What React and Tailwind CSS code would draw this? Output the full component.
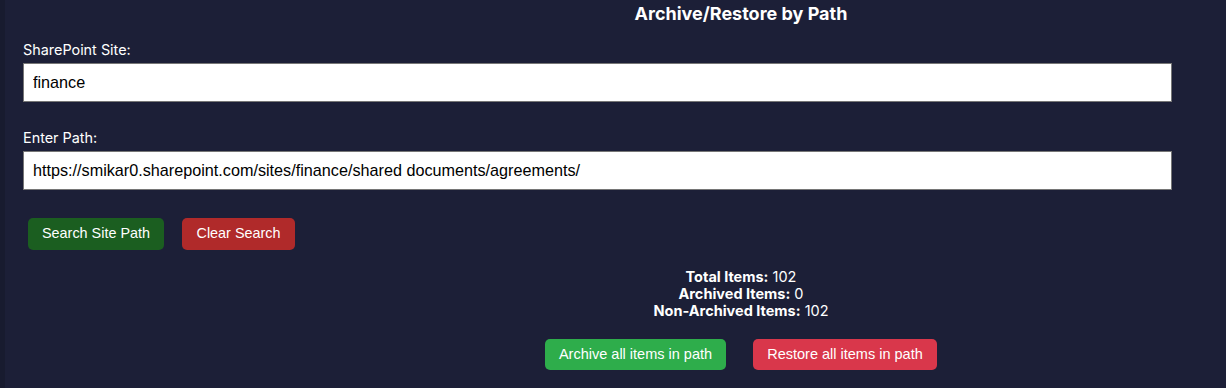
export default function App() {
  return (
    <div className="flex h-[388px] w-[1226px] overflow-hidden bg-[#1c1f37]">
      <div className="w-[5px] shrink-0 bg-[#181b2f]" />
      <div className="flex-1 pl-[18px]">
        <div className="mt-[3px] pl-[233px] text-center font-['Inter',sans-serif] text-[18px] font-bold leading-[22px] text-white">
          Archive/Restore by Path
        </div>
        <label className="mt-[16px] block font-['Inter',sans-serif] text-[14.4px] leading-[17px] text-white">
          SharePoint Site:
        </label>
        <input
          readOnly
          value="finance"
          className="mt-[5px] block h-[39px] w-[1149px] border border-[#767676] bg-white px-[9px] font-['Liberation_Sans',Arial,sans-serif] text-[16.2px] text-black outline-none"
        />
        <label className="mt-[27px] block font-['Inter',sans-serif] text-[14.4px] leading-[17px] text-white">
          Enter Path:
        </label>
        <input
          readOnly
          value="https://smikar0.sharepoint.com/sites/finance/shared documents/agreements/"
          className="mt-[5px] block h-[39px] w-[1149px] border border-[#767676] bg-white px-[9px] font-['Liberation_Sans',Arial,sans-serif] text-[16.2px] text-black outline-none"
        />
        <div className="mt-[28px] ml-[5px] flex gap-[18px] font-['Liberation_Sans',Arial,sans-serif] text-[14.4px] text-white">
          <button className="h-[32px] w-[136px] rounded-[5px] bg-[#1b5e20]">Search Site Path</button>
          <button className="h-[32px] w-[113px] rounded-[5px] bg-[#b02a2a]">Clear Search</button>
        </div>
        <div className="mt-[18px] pl-[233px] text-center font-['Inter',sans-serif] text-[14.5px] leading-[17px] text-white">
          <div><span className="font-bold">Total Items:</span> 102</div>
          <div><span className="font-bold">Archived Items:</span> 0</div>
          <div><span className="font-bold">Non-Archived Items:</span> 102</div>
        </div>
        <div className="mt-[20px] flex justify-center gap-[27px] pl-[233px] font-['Liberation_Sans',Arial,sans-serif] text-[14.5px] text-white">
          <button className="h-[31px] w-[181px] rounded-[5px] bg-[#2ead4b]">Archive all items in path</button>
          <button className="h-[31px] w-[184px] rounded-[5px] bg-[#d9374b]">Restore all items in path</button>
        </div>
      </div>
    </div>
  );
}
